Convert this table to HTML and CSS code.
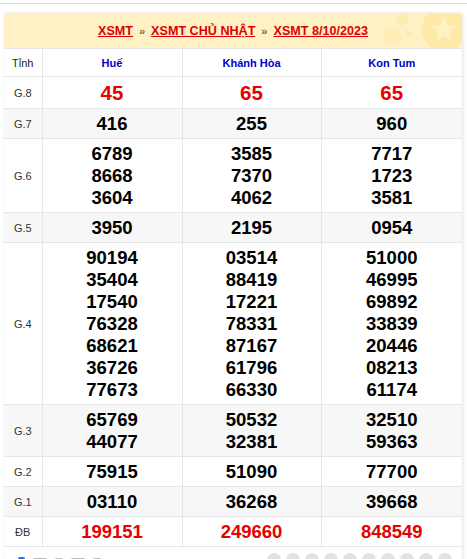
FILE: index.html
```html
<!DOCTYPE html>
<html lang="vi">
<head>
<meta charset="utf-8">
<title>XSMT 8/10/2023</title>
<link rel="stylesheet" href="styles.css">
</head>
<body>
<div class="topline"></div>
<div class="card">
  <div class="title">
    <a href="#">XSMT</a><span class="sep">»</span><a href="#">XSMT CHỦ NHẬT</a><span class="sep">»</span><a href="#">XSMT 8/10/2023</a>
    <svg class="deco" width="90" height="35" viewBox="0 0 90 35">
      <circle cx="72" cy="16" r="22" fill="#fde59a" opacity="0.7"/>
      <path d="M72 3 L75.5 12 L85 12.5 L77.5 18.5 L80 28 L72 22.5 L64 28 L66.5 18.5 L59 12.5 L68.5 12 Z" fill="#fff3c8" opacity="0.9"/>
      <circle cx="30" cy="6" r="6" fill="#fde59a" opacity="0.5"/>
      <circle cx="20" cy="24" r="9" fill="#fde59a" opacity="0.35"/>
      <circle cx="36" cy="20" r="3" fill="#fde59a" opacity="0.5"/>
    </svg>
  </div>
  <table class="kq">
    <colgroup><col class="c0"><col class="c1"><col class="c2"><col class="c3"></colgroup>
    <thead>
      <tr><th class="lbl">Tỉnh</th><th>Huế</th><th>Khánh Hòa</th><th>Kon Tum</th></tr>
    </thead>
    <tbody>
      <tr class="g8"><td class="lbl">G.8</td><td><b>45</b></td><td><b>65</b></td><td><b>65</b></td></tr>
      <tr class="alt"><td class="lbl">G.7</td><td><b>416</b></td><td><b>255</b></td><td><b>960</b></td></tr>
      <tr><td class="lbl">G.6</td><td><b>6789</b><b>8668</b><b>3604</b></td><td><b>3585</b><b>7370</b><b>4062</b></td><td><b>7717</b><b>1723</b><b>3581</b></td></tr>
      <tr class="alt"><td class="lbl">G.5</td><td><b>3950</b></td><td><b>2195</b></td><td><b>0954</b></td></tr>
      <tr><td class="lbl">G.4</td>
        <td><b>90194</b><b>35404</b><b>17540</b><b>76328</b><b>68621</b><b>36726</b><b>77673</b></td>
        <td><b>03514</b><b>88419</b><b>17221</b><b>78331</b><b>87167</b><b>61796</b><b>66330</b></td>
        <td><b>51000</b><b>46995</b><b>69892</b><b>33839</b><b>20446</b><b>08213</b><b>61174</b></td></tr>
      <tr class="alt"><td class="lbl">G.3</td><td><b>65769</b><b>44077</b></td><td><b>50532</b><b>32381</b></td><td><b>32510</b><b>59363</b></td></tr>
      <tr><td class="lbl">G.2</td><td><b>75915</b></td><td><b>51090</b></td><td><b>77700</b></td></tr>
      <tr class="alt"><td class="lbl">G.1</td><td><b>03110</b></td><td><b>36268</b></td><td><b>39668</b></td></tr>
      <tr class="db"><td class="lbl">ĐB</td><td><b>199151</b></td><td><b>249660</b></td><td><b>848549</b></td></tr>
    </tbody>
  </table>
  <div class="foot">
    <span class="fl"><i class="dot"></i><i class="dash"></i><i class="dash s"></i><i class="dash"></i><i class="dash s"></i></span>
    <span class="pills"><i></i><i></i><i></i><i></i><i></i><i></i><i></i><i></i><i></i><i></i></span>
  </div>
</div>
</body>
</html>
```
FILE: styles.css
```css
html, body { margin: 0; padding: 0; background: #fff; }
body { font-family: "Liberation Sans", Arial, sans-serif; color: #000; overflow: hidden; height: 559px; }
.topline { height: 3px; border-bottom: 1px solid #dcdcdc; }
.card {
  margin: 9px 5px 0 4px;
  box-shadow: 1px 0 3px rgba(0,0,0,0.12);
  border-radius: 4px 4px 0 0;
  overflow: hidden;
}
.title {
  position: relative;
  height: 35px;
  background: #fff1c4;
  display: flex;
  align-items: center;
  justify-content: center;
  font-size: 12.6px;
  font-weight: bold;
  padding-top: 1px;
  box-sizing: border-box;
}
.title a { color: #e00000; text-decoration: underline; }
.title .sep { color: #333; font-size: 11px; margin: 0 6px; font-weight: normal; }
.deco { position: absolute; right: 0; top: 0; }
table.kq { width: 100%; border-collapse: collapse; table-layout: fixed; }
col.c0 { width: 38px; }
col.c1 { width: 140px; }
col.c2 { width: 139px; }
col.c3 { width: 141px; }
th, td { border: 1px solid #e6e6e6; text-align: center; vertical-align: middle; }
tr > :first-child { border-left: 0; }
tr > :last-child { border-right: 0; }
thead th { height: 27px; padding: 0; font-size: 11px; font-weight: bold; color: #0000cc; background: #fff; }
thead th.lbl { color: #222; font-weight: normal; }
td { padding: 4px 0 3px; }
td.lbl { font-size: 11px; color: #333; font-weight: normal; }
td b { display: block; font-size: 18.5px; line-height: 22px; font-weight: bold; color: #000; }
tr.alt td { background: #f7f7f7; }
tr.g8 td b { color: #e60000; font-size: 20.5px; }
tr.g8 td { padding: 5px 0 4px; }
tr.db td b { color: #e60000; }
.foot { display: flex; justify-content: space-between; align-items: center; height: 20px; padding: 6px 10px 0 14px; box-sizing: border-box; }
.fl { display: flex; align-items: center; gap: 8px; }
.dot { display: inline-block; width: 7px; height: 7px; background: #2a6fd6; border-radius: 2px; }
.dash { display: inline-block; width: 14px; height: 4px; background: #bbb; border-radius: 2px; }
.dash.s { width: 8px; }
.pills { display: flex; gap: 5px; }
.pills i { display: inline-block; width: 14px; height: 14px; border-radius: 50%; background: #e2e2e2; }
```
